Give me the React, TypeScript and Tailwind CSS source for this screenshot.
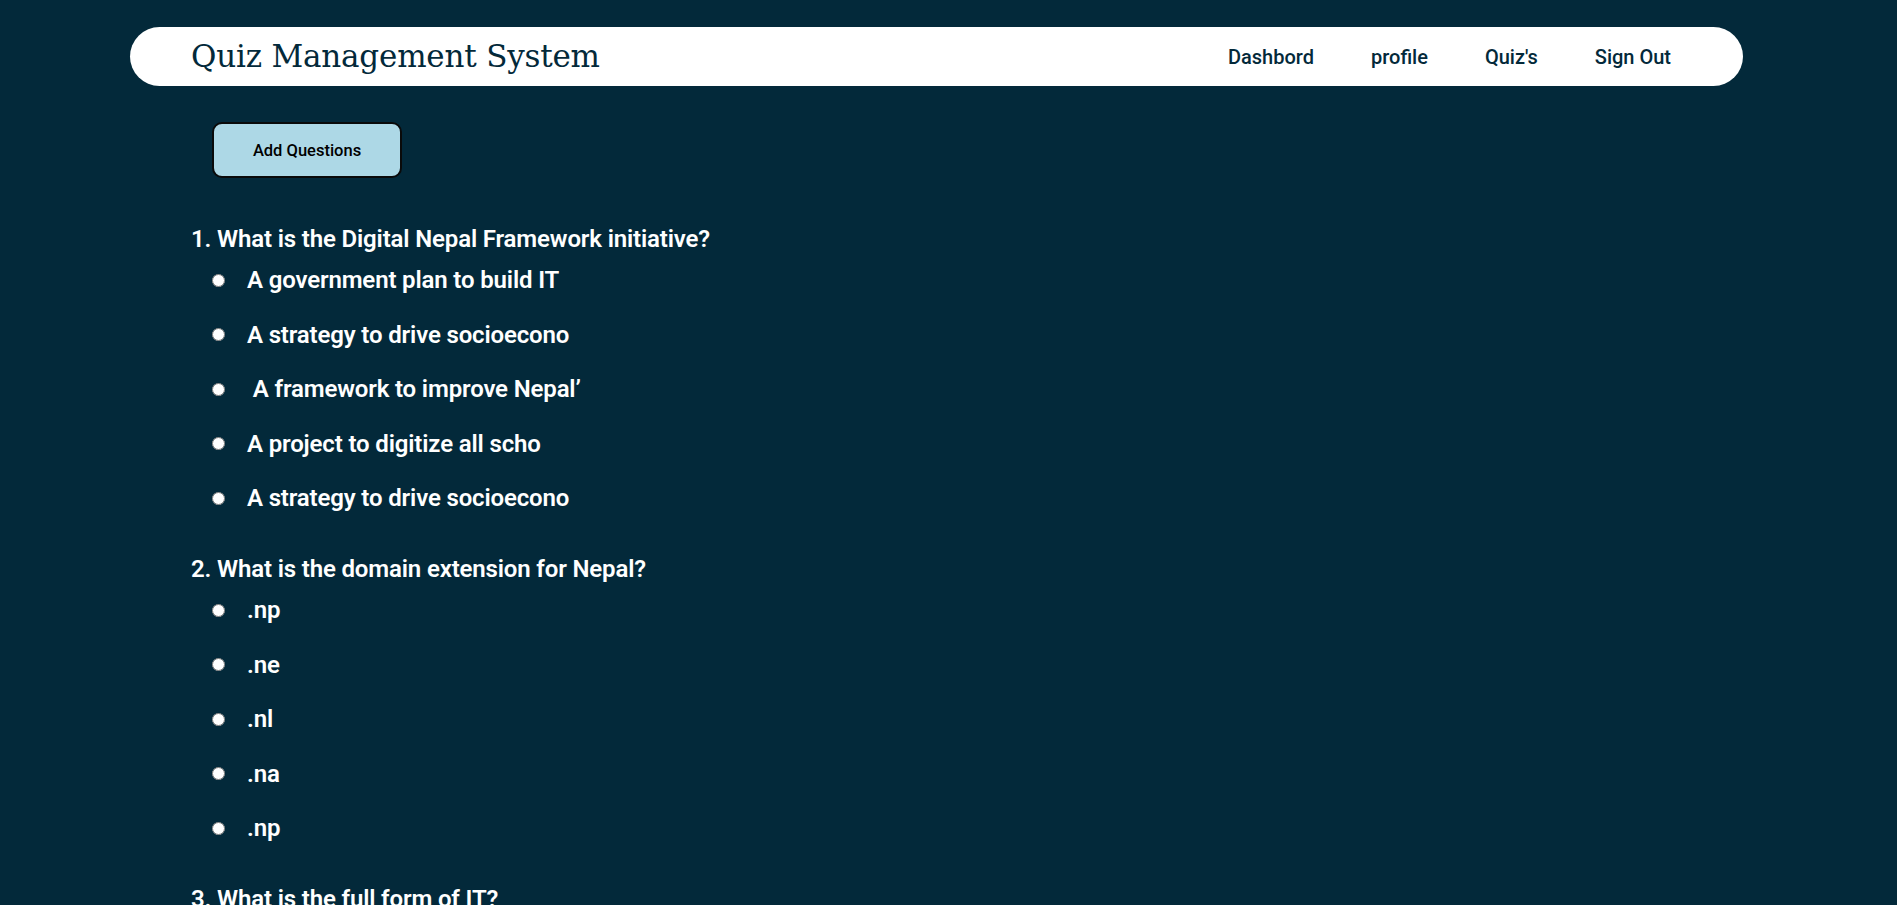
import React from 'react'

type Question = {
  title: string
  options: string[]
}

const questions: Question[] = [
  {
    title: '1. What is the Digital Nepal Framework initiative?',
    options: [
      'A government plan to build IT',
      'A strategy to drive socioecono',
      ' A framework to improve Nepal’',
      'A project to digitize all scho',
      'A strategy to drive socioecono',
    ],
  },
  {
    title: '2. What is the domain extension for Nepal?',
    options: ['.np', '.ne', '.nl', '.na', '.np'],
  },
  {
    title: '3. What is the full form of IT?',
    options: ['Information Technology', 'Internet Technology', 'Intelligent Technology', 'Interior Tech', 'Information Technology'],
  },
]

function Navbar(): React.JSX.Element {
  const links = ['Dashbord', 'profile', "Quiz's", 'Sign Out']
  return (
    <header className="ml-[130px] mr-[154px] mt-[27px] flex h-[59px] items-center justify-between rounded-full bg-white pl-[61px] pr-[72px]">
      <h1 className="font-['DejaVu_Serif',serif] text-[31px] leading-none tracking-[-0.2px] text-[#03293a]">
        Quiz Management System
      </h1>
      <nav className="flex items-center gap-[57px]">
        {links.map((l) => (
          <a key={l} href="#" className="font-['Roboto',sans-serif] text-[20px] font-medium text-[#03293a]">
            {l}
          </a>
        ))}
      </nav>
    </header>
  )
}

function QuestionBlock({ q, index }: { q: Question; index: number }): React.JSX.Element {
  return (
    <div className={index === 0 ? 'mt-[46px]' : 'mt-[41px]'}>
      <p className="h-[30px] text-[24px] font-semibold leading-[30px] tracking-[-0.15px] text-white">{q.title}</p>
      <div className="mt-[11px] flex flex-col gap-[24.5px] pl-[21px]">
        {q.options.map((o, i) => (
          <label key={i} className="flex h-[30px] items-center">
            <input
              type="radio"
              name={`q${index}`}
              className="m-0 h-[13px] w-[13px] shrink-0"
            />
            <span className="ml-[22px] whitespace-pre text-[24px] font-semibold leading-[30px] tracking-[-0.15px] text-white">
              {o}
            </span>
          </label>
        ))}
      </div>
    </div>
  )
}

export default function App(): React.JSX.Element {
  return (
    <div className="h-[905px] overflow-hidden bg-[#03293a] font-['Roboto',sans-serif]">
      <Navbar />
      <main className="pl-[191px]">
        <button className="ml-[21px] mt-[36px] h-[56px] w-[190px] rounded-[10px] border-2 border-[#0a0a0a] bg-[#add8e6] pt-[3px] text-[16.5px] font-medium text-black">
          Add Questions
        </button>
        {questions.map((q, i) => (
          <QuestionBlock key={i} q={q} index={i} />
        ))}
      </main>
    </div>
  )
}
